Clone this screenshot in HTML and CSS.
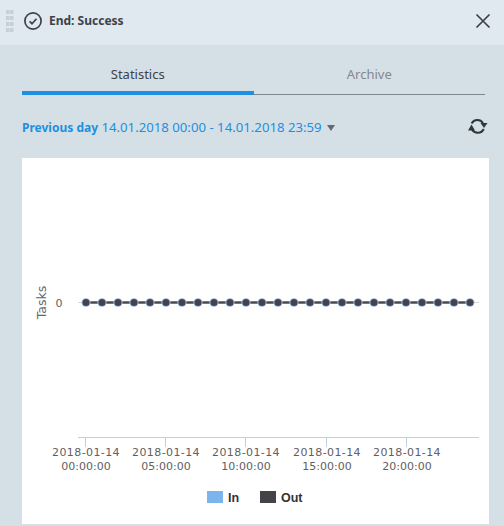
FILE: index.html
```html
<!DOCTYPE html>
<html lang="en">
<head>
<meta charset="utf-8">
<title>End: Success</title>
<link rel="stylesheet" href="styles.css">
</head>
<body>
<div class="panel">
  <header class="head">
    <div class="head-left">
      <div class="grip"><i></i><i></i><i></i><i></i><i></i><i></i><i></i><i></i></div>
      <svg class="status" width="20" height="20" viewBox="0 0 20 20"><circle cx="10" cy="10" r="8.1" fill="none" stroke="#3d4248" stroke-width="1.7"/><path d="M6.6 10.3l2.4 2.4 4.5-5" fill="none" stroke="#3d4248" stroke-width="1.7"/></svg>
      <span class="title">End: Success</span>
    </div>
    <svg class="close" width="16" height="16" viewBox="0 0 16 16"><path d="M1.5 1.5l13 13M14.500 1.500l-13 13" fill="none" stroke="#3d4248" stroke-width="1.7"/></svg>
  </header>
  <main class="body">
    <nav class="tabs">
      <div class="tab tab-active">Statistics</div>
      <div class="tab">Archive</div>
    </nav>
    <div class="range">
      <div class="range-text"><b>Previous day</b> 14.01.2018 00:00 - 14.01.2018 23:59<span class="caret"></span></div>
      <svg class="refresh" width="20" height="18" viewBox="0 0 20 18"><path d="M3.600 5.500A6.700 6.700 0 0 1 15 5" fill="none" stroke="#30353a" stroke-width="2"/><path d="M12.500 5h7l-3.500 5z" fill="#30353a"/><path d="M15.800 11A6.700 6.700 0 0 1 4 11.500" fill="none" stroke="#30353a" stroke-width="2"/><path d="M0 12.500h7L3.500 6.500z" fill="#30353a"/></svg>
    </div>
    <section class="card">
      <svg class="chart" width="467" height="366" viewBox="22 158 467 366">
        <path d="M78 302.500H479" stroke="#d8d8d8" fill="none"/>
        <path d="M78 437.500H479M85.500 437v10M165.500 437v10M245.500 437v10M326.500 437v10M406.500 437v10" stroke="#c0d0e0" fill="none"/>
        <text class="axis-title" transform="translate(46 302.500) rotate(-90)">Tasks</text>
        <text class="axis-label" x="59" y="306.500">0</text>
        <g class="labels">
          <text class="axis-label date" x="86" y="456">2018-01-14</text><text class="axis-label" x="86" y="470">00:00:00</text>
          <text class="axis-label date" x="166" y="456">2018-01-14</text><text class="axis-label" x="166" y="470">05:00:00</text>
          <text class="axis-label date" x="246" y="456">2018-01-14</text><text class="axis-label" x="246" y="470">10:00:00</text>
          <text class="axis-label date" x="327" y="456">2018-01-14</text><text class="axis-label" x="327" y="470">15:00:00</text>
          <text class="axis-label date" x="407" y="456">2018-01-14</text><text class="axis-label" x="407" y="470">20:00:00</text>
        </g>
        <path d="M86 302.500H470" stroke="#4a4a50" stroke-width="2.500" fill="none"/>
        <g class="points">
          <circle cx="86" cy="302.500"/><circle cx="102" cy="302.500"/><circle cx="118" cy="302.500"/><circle cx="134" cy="302.500"/><circle cx="150" cy="302.500"/><circle cx="166" cy="302.500"/><circle cx="182" cy="302.500"/><circle cx="198" cy="302.500"/><circle cx="214" cy="302.500"/><circle cx="230" cy="302.500"/><circle cx="246" cy="302.500"/><circle cx="262" cy="302.500"/><circle cx="278" cy="302.500"/><circle cx="294" cy="302.500"/><circle cx="310" cy="302.500"/><circle cx="326" cy="302.500"/><circle cx="342" cy="302.500"/><circle cx="358" cy="302.500"/><circle cx="374" cy="302.500"/><circle cx="390" cy="302.500"/><circle cx="406" cy="302.500"/><circle cx="422" cy="302.500"/><circle cx="438" cy="302.500"/><circle cx="454" cy="302.500"/><circle cx="470" cy="302.500"/>
        </g>
        <rect x="207" y="491" width="16" height="12" fill="#7cb5ec"/>
        <text class="legend" x="228" y="502">In</text>
        <rect x="260" y="491" width="16" height="12" fill="#434348"/>
        <text class="legend" x="281" y="502">Out</text>
      </svg>
    </section>
  </main>
</div>
</body>
</html>
```
FILE: styles.css
```css
html, body { margin: 0; padding: 0; }
body { width: 504px; height: 526px; overflow: hidden; background: #d5dfe6; font-family: "Noto Sans", sans-serif; }
.panel { display: flex; flex-direction: column; height: 526px; }
.head { height: 45px; background: #dfe9ef; display: flex; align-items: center; justify-content: space-between; padding: 0 13px 4px 6px; box-sizing: border-box; flex: none; }
.head-left { display: flex; align-items: center; }
.grip { display: grid; grid-template-columns: 4px 4px; gap: 2px 0; margin-right: 9px; }
.grip i { width: 4px; height: 4px; background: #c6d0d7; display: block; box-shadow: inset -1px 0 0 #d2dce3; }
.status { margin-right: 6px; }
.title { font-family: "Noto Sans", sans-serif; font-size: 12px; font-weight: 700; color: #3d4248; }
.body { flex: 1; padding: 0 15px 2px 22px; display: flex; flex-direction: column; }
.tabs { display: flex; height: 50px; margin-right: 4px; flex: none; border-bottom: 1px solid #7d878e; box-sizing: border-box; }
.tab { flex: 1; text-align: center; font-size: 13px; line-height: 16px; padding-top: 21px; color: #84898e; box-sizing: border-box; }
.tab-active { color: #3d4248; border-bottom: 4px solid #1e8fe1; margin-bottom: -1px; }
.range { height: 63px; padding-top: 2px; flex: none; display: flex; justify-content: space-between; align-items: center; box-sizing: border-box; }
.range-text { color: #1e8fe1; font-size: 13.200px; line-height: 16px; }
.range-text b { font-weight: 700; font-size: 12px; }
.caret { display: inline-block; margin-left: 5px; border-left: 4px solid transparent; border-right: 4px solid transparent; border-top: 6px solid #616a72; vertical-align: 1px; }
.refresh { margin-right: 1px; margin-top: -2px; }
.card { flex: 1; background: #fff; }
.chart { display: block; }
.axis-title { font: 12.500px "DejaVu Sans", sans-serif; fill: #666; text-anchor: middle; }
.axis-label { font: 11px "DejaVu Sans", sans-serif; fill: #5f5f5f; text-anchor: middle; }
.date { letter-spacing: .4px; }
.points circle { r: 3.600px; fill: #434348; stroke: #a9cdf0; stroke-width: 2; paint-order: stroke; }
.legend { font: 700 12.500px "Liberation Sans", sans-serif; fill: #333; }
```
